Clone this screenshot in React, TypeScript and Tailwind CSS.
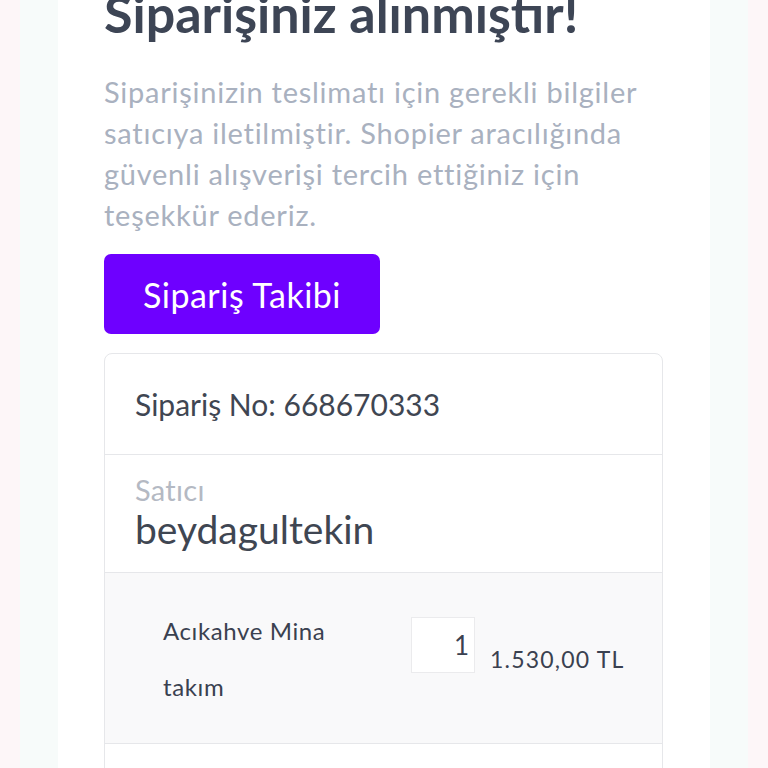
export default function App() {
  return (
    <div className="min-h-screen bg-[#fdf6f8] px-[20px] font-[Lato,sans-serif]">
      <div className="min-h-screen bg-[#f7fbfa] px-[38px]">
        <div className="min-h-screen bg-white px-[46px] pb-10">
          <h1 className="-mt-[17px] text-[52px] font-bold leading-[60px] text-[#3d4555]">
            Siparişiniz alınmıştır!
          </h1>
          <p className="mt-[28px] text-[29px] leading-[41px] tracking-[0.75px] text-[#a9b1bf]">
            Siparişinizin teslimatı için gerekli bilgiler satıcıya iletilmiştir. Shopier aracılığında
            güvenli alışverişi tercih ettiğiniz için teşekkür ederiz.
          </p>
          <button className="mt-[19px] flex h-[80px] w-[276px] items-center justify-center rounded-[7px] bg-[#6e00ff] text-[34px] tracking-[0.5px] text-white">
            Sipariş Takibi
          </button>

          <div className="mt-[19px] w-[559px] overflow-hidden rounded-[8px] border border-[#e6e7ea]">
            <div className="flex h-[100px] items-center px-[30px] text-[30px] text-[#3f4652]">
              Sipariş No: 668670333
            </div>
            <div className="border-t border-[#e6e7ea] px-[30px] pb-[21px] pt-[18px]">
              <div className="text-[29px] leading-[34px] tracking-[0.3px] text-[#b4b9c3]">Satıcı</div>
              <div className="text-[39px] leading-[44px] text-[#3f4652]">beydagultekin</div>
            </div>
            <div className="flex h-[171px] items-start border-t border-[#e6e7ea] bg-[#f9f9fa] pl-[58px] pt-[30px] text-[#3a4150]">
              <div className="w-[200px] text-[24px] leading-[56px] tracking-[0.6px]">Acıkahve Mina takım</div>
              <div className="ml-[48px] mt-[14px] flex h-[56px] w-[64px] items-center justify-end border border-[#ebebed] bg-white pr-[5px] text-[26px]">
                1
              </div>
              <div className="ml-[15px] mt-[41px] text-[23px] leading-[30px] tracking-[1.2px]">1.530,00 TL</div>
            </div>
            <div className="h-[60px] border-t border-[#e6e7ea]" />
          </div>
        </div>
      </div>
    </div>
  );
}
